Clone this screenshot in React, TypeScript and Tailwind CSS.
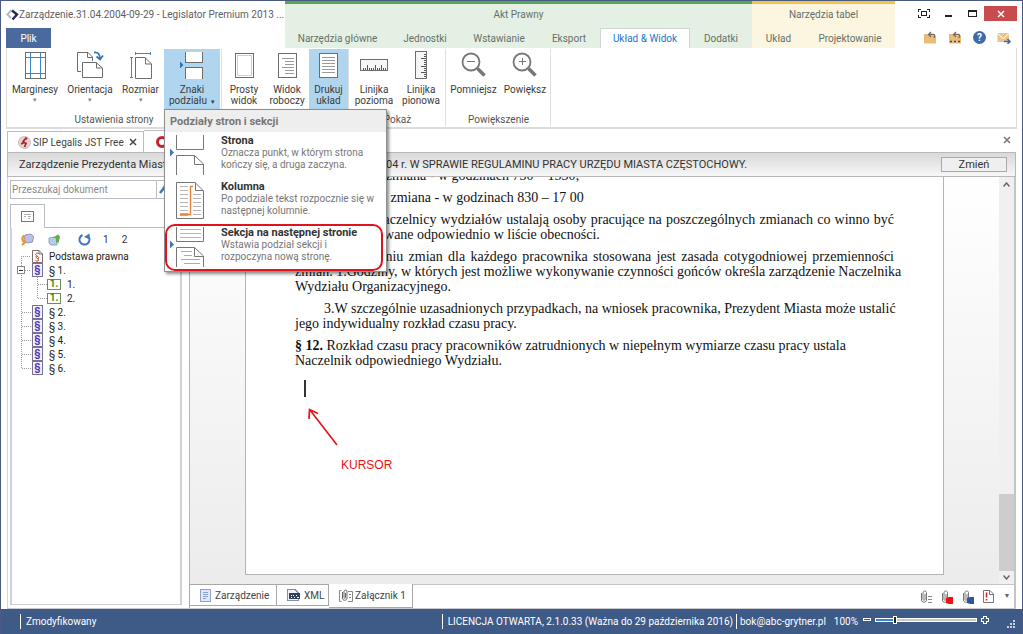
import React from "react";

interface BoxProps {
  className?: string;
  children?: React.ReactNode;
}

interface RibbonButtonProps {
  lines: string[];
  icon: React.ReactNode;
  className: string;
  arrow?: boolean;
  active?: boolean;
}

/* ---------- icons ---------- */

const Svg = ({
  w,
  h,
  crisp = true,
  children,
}: {
  w: number;
  h: number;
  crisp?: boolean;
  children: React.ReactNode;
}) => (
  <svg
    width={w}
    height={h}
    viewBox={`0 0 ${w} ${h}`}
    fill="none"
    className="shrink-0"
    shapeRendering={crisp ? "crispEdges" : "auto"}
    aria-hidden="true"
  >
    {children}
  </svg>
);

const MarginsIcon = () => (
  <Svg w={21} h={27}>
    <rect x="0.5" y="0.5" width="20" height="26" stroke="#6d6d6d" />
    <path d="M5.5 1v25M15.5 1v25M1 5.5h19M1 21.5h19" stroke="#3f87c4" />
  </Svg>
);

const OrientationIcon = () => (
  <Svg w={28} h={28} crisp={false}>
    <path d="M5 20.5H1.5V1.5H12L16.5 6V10" stroke="#6d6d6d" />
    <path d="M11.5 1.5V6.5H16.5" stroke="#6d6d6d" />
    <path d="M6.5 11.5H20L26.5 17V26.5H6.5Z" fill="#fff" stroke="#6d6d6d" />
    <path d="M20.5 11.5V17H26" stroke="#6d6d6d" />
    <path d="M18 1.5C22 1 24 3 24 8M20.5 5.5L24 8.5L27 4.5" stroke="#2f77b8" strokeWidth="1.8" />
  </Svg>
);

const SizeIcon = () => (
  <Svg w={22} h={27} crisp={false}>
    <path d="M5 1.5H21M5.5 0V3M20.5 0V3" stroke="#3f87c4" />
    <path d="M1.5 5V26M0 5.5H3M0 25.5H3" stroke="#3f87c4" />
    <path d="M5.5 5.5H15L21.5 12V26.5H5.5Z" fill="#fff" stroke="#6d6d6d" />
    <path d="M15.5 5.5V12H21" stroke="#6d6d6d" />
  </Svg>
);

const BreakIcon = () => (
  <Svg w={24} h={27}>
    <path d="M5 0H23V11H5Z" fill="#fff" />
    <path d="M5 15H23V27H5Z" fill="#fff" />
    <path d="M5.5 0V10.5H22.5V0M5.5 27V15.5H22.5V27" stroke="#6d6d6d" />
    <path d="M0 9.5L4 13L0 16.5Z" fill="#2f77b8" />
  </Svg>
);

const PageIcon = ({ kind }: { kind: "plain" | "work" | "print" }) => (
  <Svg w={19} h={25}>
    <rect x="0.5" y="0.5" width="18" height="24" fill="#fff" stroke="#6d6d6d" />
    {kind === "plain" && <rect x="2.5" y="2.5" width="14" height="20" stroke="#cfcfcf" />}
    {kind === "work" && (
      <path d="M4 5.5H16M7 8.5H16M7 11.5H16M4 14.5H16M7 17.5H16M7 20.5H16" stroke="#9a9a9a" />
    )}
    {kind === "print" && (
      <path d="M3 4.5H16M3 7.5H16M3 10.5H16M3 13.5H16M3 16.5H16M3 19.5H16" stroke="#9a9a9a" />
    )}
  </Svg>
);

const RulerIcon = () => (
  <Svg w={28} h={12}>
    <rect x="0.5" y="0.5" width="27" height="11" fill="#f6f6f6" stroke="#6d6d6d" />
    <path
      d="M3.5 9V11M5.5 9V11M7.5 6V11M9.5 9V11M11.5 9V11M13.5 9V11M15.5 6V11M17.5 9V11M19.5 9V11M21.5 6V11M23.5 9V11M25.5 9V11"
      stroke="#555"
    />
  </Svg>
);

const RulerVIcon = () => (
  <Svg w={12} h={28}>
    <rect x="0.5" y="0.5" width="11" height="27" fill="#f6f6f6" stroke="#6d6d6d" />
    <path
      d="M9 3.5H11M9 5.5H11M6 7.5H11M9 9.5H11M9 11.5H11M9 13.5H11M6 15.5H11M9 17.5H11M9 19.5H11M6 21.5H11M9 23.5H11M9 25.5H11"
      stroke="#555"
    />
  </Svg>
);

const ZoomIcon = ({ plus = false }: { plus?: boolean }) => (
  <Svg w={26} h={26} crisp={false}>
    <circle cx="10" cy="10" r="8.5" stroke="#777" strokeWidth="1.8" />
    <path d="M16.5 16.5L23.5 23.5" stroke="#777" strokeWidth="3.5" />
    <path d={plus ? "M7 9.5H14M10.5 6V13" : "M6 9.5H14"} stroke="#777" />
  </Svg>
);

const MenuPageIcon = ({ text = false }: { text?: boolean }) => (
  <Svg w={34} h={40} crisp={false}>
    <path d="M6.5 0V14.500H33.5V0" stroke="#777" />
    <path d="M6.5 40V20.5H24.5L33.5 29V40" stroke="#777" />
    <path d="M24.5 20.5V29.5H33.5" stroke="#777" />
    <path d="M0 13.5L4 17.5L0 21.5Z" fill="#3b78b4" />
    {text && (
      <>
        <path d="M10 2.5H31M10 6.5H31M10 10.5H31" stroke="#b5b5b5" />
        <path d="M11 24.5H22M14 28.5H22M11 32.5H30M14 36.5H30" stroke="#e8a04c" strokeWidth="1.2" />
      </>
    )}
  </Svg>
);

const MenuColumnIcon = () => (
  <Svg w={34} h={38} crisp={false}>
    <path d="M6.5 1.5H25L33.5 10V37.5H6.5Z" stroke="#777" />
    <path d="M25.5 1.5V9.5H33.5" stroke="#777" />
    <path
      d="M10 5.5H18M10 9.5H18M10 13.5H18M10 17.5H18M10 21.5H18M10 25.5H18M10 29.5H18M23 13.5H31M23 17.5H31M23 21.5H31M23 25.5H31M23 29.5H31M23 33.5H31"
      stroke="#b5b5b5"
    />
    <path d="M10 33.5H20.5V5.5H23" stroke="#e8833a" strokeWidth="1.4" />
    <path d="M10 33.5H18" stroke="#e8833a" strokeWidth="2.5" />
  </Svg>
);

const FolderIcon = ({ dots = false }: { dots?: boolean }) => (
  <Svg w={14} h={13} crisp={false}>
    <path d="M1 3H5L6 4.5H13V12.5H1Z" fill="#e9bd78" />
    <path d="M6 3.5H10.5C12 3.5 12 6.5 10.5 6.5M8 1L5.5 3.5L8 6" stroke="#7a6a62" strokeWidth="1.3" />
    {dots && <path d="M2 10.5H4M6 10.5H8M10 10.5H12" stroke="#35507f" strokeWidth="1.6" />}
  </Svg>
);

const MailIcon = () => (
  <Svg w={14} h={13} crisp={false}>
    <path d="M0.5 2H12V11H0.5Z" fill="#eac488" />
    <path d="M0.5 2.5L6.2 7.5L12 2.5" stroke="#fff" />
    <path d="M7 10.5H13M10.5 8L13 10.5L10.5 13" stroke="#3c68a6" strokeWidth="1.5" />
  </Svg>
);

const ClipIcon = ({ badge }: { badge?: "red" | "blue" }) => (
  <Svg w={13} h={14} crisp={false}>
    <path
      d="M1.5 3V10C1.5 13 6.5 13 6.5 10V2.5C6.5 0.5 3 0.5 3 2.5V9.5C3 10.5 5 10.5 5 9.5V4"
      stroke="#777"
    />
    {!badge && <path d="M8 6.5H12M8 9.5H12M8 12.5H12" stroke="#888" />}
    {badge === "red" && <path d="M5 8L8 7H12V14H8L5 13Z" fill="#ee1111" />}
    {badge === "blue" && <path d="M5 8L8 7H12V14H8L5 13Z" fill="#2d55a0" />}
  </Svg>
);

const WarnPageIcon = () => (
  <Svg w={11} h={13} crisp={false}>
    <path d="M0.5 0.5H7L10.5 4V12.5H0.5Z" stroke="#777" />
    <path d="M6.5 0.5V4.5H10.5" stroke="#777" />
    <path d="M3.5 2.5V7.5M3.5 9V10.5" stroke="#e02020" strokeWidth="1.5" />
  </Svg>
);

const CloseX = () => (
  <Svg w={8} h={8} crisp={false}>
    <path d="M1 1L7 7M7 1L1 7" stroke="currentColor" strokeWidth="1.5" />
  </Svg>
);

const SectionIcon = () => (
  <span className="flex h-[14px] w-[11px] shrink-0 items-center justify-center border border-[#77738f] bg-[#f4f1ff] text-[10px] font-bold leading-none text-[#5538b8]">
    §
  </span>
);

const NumberIcon = () => (
  <span className="flex h-[11px] w-[14px] shrink-0 items-center justify-center border border-[#6f8a60] bg-white text-[10px] font-bold leading-none text-[#3f8f1f]">
    1.
  </span>
);

const ProvisionIcon = () => (
  <Svg w={11} h={13} crisp={false}>
    <path d="M0.5 0.5H7L10.5 4V12.5H0.5Z" fill="#fff" stroke="#7b6d6d" />
    <path d="M7 0.5V4H10.5" stroke="#7b6d6d" />
    <path
      d="M6.5 3.5C4 2.5 2.5 4.5 5 6C7.5 7 7 9 5.5 8.5M4.5 6C2.5 8 7.5 9 6.5 10.5C5.5 11.5 4 11 3.5 10.5"
      stroke="#b03a2e"
    />
  </Svg>
);

/* ---------- header ---------- */

const HeaderTab: React.FC<BoxProps & { active?: boolean }> = ({ active, className = "", children }) => (
  <button
    className={`h-5 whitespace-nowrap text-center ${
      active ? "border-x border-t border-[#cfd8cf] bg-white text-[#1c74c8]" : "text-[#66706a]"
    } ${className}`}
  >
    {children}
  </button>
);

const Header = () => (
  <header className="flex text-[10px]">
    <div className="flex w-[284px] shrink-0 flex-col justify-between pl-[5px]">
      <div className="flex h-[26px] items-center text-[#606060]">
        <Svg w={13} h={13} crisp={false}>
          <path d="M5.5 2L1.5 6.5L5 10" stroke="#b9b6c8" strokeWidth="2" />
          <path d="M6 2.5L11 6.5L6.5 11.5" stroke="#24285c" strokeWidth="2.4" />
        </Svg>
        <h1 className="whitespace-nowrap">Zarządzenie.31.04.2004-09-29 - Legislator Premium 2013 ...</h1>
      </div>
      <button className="h-5 w-[45px] bg-[#4a6a9f] text-white">Plik</button>
    </div>
    <div className="shrink-0 border-t-[3px] border-[#57a557] bg-[#e4f0e4]">
      <div className="flex h-[24px] items-center justify-center pb-1 text-[#66706a]">Akt Prawny</div>
      <nav className="flex">
        <HeaderTab className="w-[105px]">Narzędzia główne</HeaderTab>
        <HeaderTab className="w-[70px]">Jednostki</HeaderTab>
        <HeaderTab className="w-[78px]">Wstawianie</HeaderTab>
        <HeaderTab className="w-[62px]">Eksport</HeaderTab>
        <HeaderTab active className="w-[90px]">
          Układ &amp; Widok
        </HeaderTab>
        <HeaderTab className="w-[62px]">Dodatki</HeaderTab>
      </nav>
    </div>
    <div className="shrink-0 border-t-[3px] border-[#f0c648] bg-[#fcf5df]">
      <div className="flex h-[24px] items-center justify-center pb-1 text-[#66706a]">Narzędzia tabel</div>
      <nav className="flex">
        <HeaderTab className="w-[53px]">Układ</HeaderTab>
        <HeaderTab className="w-[90px]">Projektowanie</HeaderTab>
      </nav>
    </div>
    <div className="flex flex-1 flex-col justify-between pt-[5px]">
      <div className="flex items-center justify-end pr-[5px]">
        <button className="flex w-6 justify-center" aria-label="Pełny ekran">
          <Svg w={12} h={9}>
            <path
              d="M0.5 3V0.5H3M9 0.5H11.5V3M11.5 6V8.5H9M3 8.5H0.5V6M3.5 2.5H8.5V6.5H3.5Z"
              stroke="#222"
            />
          </Svg>
        </button>
        <button className="flex w-6 justify-center" aria-label="Minimalizuj">
          <Svg w={7} h={7}>
            <path d="M0 5H7V7H0Z" fill="#222" />
          </Svg>
        </button>
        <button className="flex w-6 justify-center" aria-label="Maksymalizuj">
          <Svg w={9} h={7}>
            <path d="M0.5 1.5H8.5V6.5H0.5ZM0 0.5H9" stroke="#222" />
          </Svg>
        </button>
        <button className="flex h-[15px] w-[33px] items-center justify-center bg-[#c84c4e] text-white" aria-label="Zamknij">
          <CloseX />
        </button>
      </div>
      <div className="flex items-center justify-end gap-[11px] pb-1 pr-[11px]">
        <FolderIcon />
        <FolderIcon dots />
        <span className="flex h-[13px] w-[13px] items-center justify-center rounded-full bg-[#3f6aa8] text-[10px] font-bold leading-none text-white">
          ?
        </span>
        <MailIcon />
      </div>
    </div>
  </header>
);

/* ---------- ribbon ---------- */

const RibbonButton: React.FC<RibbonButtonProps> = ({ lines, icon, className, arrow, active }) => (
  <button
    className={`flex h-[60px] shrink-0 flex-col items-center whitespace-nowrap pt-[2px] leading-[11px] text-[#3c3c3c] ${
      active ? "bg-[#b0d5ef]" : ""
    } ${className}`}
  >
    <span className="mb-[5px] flex h-7 shrink-0 items-center">{icon}</span>
    {lines.map((line, index) => (
      <span key={line}>
        {line}
        {arrow && index === 1 && <span className="ml-1 text-[7px]">▾</span>}
      </span>
    ))}
    {arrow && lines.length === 1 && <span className="text-[7px] text-[#888]">▾</span>}
  </button>
);

const RibbonGroup: React.FC<BoxProps & { label?: string }> = ({ label, className = "", children }) => (
  <section className={`flex h-[77px] shrink-0 flex-col justify-between border-r border-[#e0e0e0] ${className}`}>
    <div className="flex">{children}</div>
    <div className="h-[13px] text-center leading-[13px] text-[#555]">{label}</div>
  </section>
);

const menuItems = [
  {
    title: "Strona",
    lines: ["Oznacza punkt, w którym strona", "kończy się, a druga zaczyna."],
    icon: <MenuPageIcon />,
  },
  {
    title: "Kolumna",
    lines: ["Po podziale tekst rozpocznie się w", "następnej kolumnie."],
    icon: <MenuColumnIcon />,
  },
  {
    title: "Sekcja na następnej stronie",
    lines: ["Wstawia podział sekcji i", "rozpoczyna nową stronę."],
    icon: <MenuPageIcon text />,
    marked: true,
  },
];

const BreaksMenu = () => (
  <div
    role="menu"
    className="absolute left-0 top-full z-20 w-[223px] border border-[#8f8f8f] bg-white pb-px shadow-[2px_2px_3px_rgba(0,0,0,0.45)]"
  >
    <div className="h-[22px] bg-[#eeeeee] pl-[5px] text-[11px] font-bold leading-[23px] text-[#777]">
      Podziały stron i sekcji
    </div>
    {menuItems.map((item) => (
      <button
        key={item.title}
        role="menuitem"
        className="relative flex h-[46px] w-full gap-[17px] whitespace-nowrap pl-[5px] pt-[3px] text-left"
      >
        {item.icon}
        <span className="flex flex-col leading-3 text-[#777]">
          <b className="text-[11px] text-[#333]">{item.title}</b>
          {item.lines.map((line) => (
            <span key={line}>{line}</span>
          ))}
        </span>
        {item.marked && (
          <span className="absolute inset-x-0 -bottom-px top-0 mr-[3px] rounded-[10px] border-2 border-[#e0121c]" />
        )}
      </button>
    ))}
  </div>
);

const Ribbon = () => (
  <div className="mx-[5px] flex h-[81px] border-b-2 border-l border-r border-[#dcdcdc] pt-px text-[10px]">
    <RibbonGroup label="Ustawienia strony" className="w-[215px]">
      <RibbonButton className="w-[56px]" lines={["Marginesy"]} icon={<MarginsIcon />} arrow />
      <RibbonButton className="w-[54px]" lines={["Orientacja"]} icon={<OrientationIcon />} arrow />
      <RibbonButton className="w-[47px]" lines={["Rozmiar"]} icon={<SizeIcon />} arrow />
      <div className="relative">
        <RibbonButton className="w-[56px]" lines={["Znaki", "podziału"]} icon={<BreakIcon />} arrow active />
        <BreaksMenu />
      </div>
    </RibbonGroup>
    <RibbonGroup className="w-[127px] pl-px">
      <RibbonButton className="w-[42px]" lines={["Prosty", "widok"]} icon={<PageIcon kind="plain" />} />
      <RibbonButton className="w-[44px]" lines={["Widok", "roboczy"]} icon={<PageIcon kind="work" />} />
      <RibbonButton className="w-[39px]" lines={["Drukuj", "układ"]} icon={<PageIcon kind="print" />} active />
    </RibbonGroup>
    <RibbonGroup label="Pokaż" className="w-[97px] pl-px">
      <RibbonButton className="w-[48px]" lines={["Linijka", "pozioma"]} icon={<RulerIcon />} />
      <RibbonButton className="w-[46px]" lines={["Linijka", "pionowa"]} icon={<RulerVIcon />} />
    </RibbonGroup>
    <RibbonGroup label="Powiększenie" className="w-[105px] pl-px">
      <RibbonButton className="w-[53px]" lines={["Pomniejsz"]} icon={<ZoomIcon />} />
      <RibbonButton className="w-[50px]" lines={["Powiększ"]} icon={<ZoomIcon plus />} />
    </RibbonGroup>
  </div>
);

/* ---------- left panel ---------- */

const Branch = ({ d }: { d: string }) => (
  <Svg w={15} h={14}>
    <path d={d} stroke="#999" strokeDasharray="1 1" />
  </Svg>
);

const TreeRow: React.FC<{ label: string; icon: React.ReactNode; children: React.ReactNode }> = ({
  label,
  icon,
  children,
}) => (
  <li className="flex h-[14px] items-center text-[#222]">
    {children}
    {icon}
    <span className="pl-[6px]">{label}</span>
  </li>
);

const LeftPanel = () => (
  <aside className="mb-[3px] ml-[2px] mr-[7px] flex w-[172px] shrink-0 flex-col pt-[3px] text-[10px]">
    <div className="flex h-[19px] items-center border border-[#b9bcc6]">
      <input
        aria-label="Przeszukaj dokument"
        placeholder="Przeszukaj dokument"
        className="h-full w-[146px] border-r border-[#b9bcc6] pl-px outline-none placeholder:text-[#8a8a8a]"
      />
      <Svg w={12} h={12} crisp={false}>
        <path d="M3 9L7 4" stroke="#3c78b4" strokeWidth="2.5" />
        <circle cx="8.5" cy="4" r="2.5" stroke="#3c78b4" />
      </Svg>
    </div>
    <div className="flex pt-[5px]">
      <button
        className="flex h-[24px] w-[35px] items-center justify-center border-l border-r border-t border-[#b9bcc6]"
        aria-label="Struktura"
      >
        <Svg w={13} h={11}>
          <rect x="0.5" y="0.5" width="12" height="10" stroke="#777" />
          <path d="M3 3.5H10M3 5.5H5M7 5.5H10M7 7.5H9" stroke="#aaa" />
        </Svg>
      </button>
      <div className="flex-1 border-b border-[#b9bcc6]" />
    </div>
    <div className="flex flex-1 flex-col border-x-2 border-b border-[#d0d0da] pl-[5px] pt-[3px]">
      <div className="flex h-4 items-center pl-1 text-[#333]">
        <button aria-label="Zwiń" className="mr-[14px]">
          <Svg w={13} h={13} crisp={false}>
            <path d="M4 2L10 1L12.5 3.5L11.5 9L6 10L3 7Z" fill="#b9c2e6" stroke="#8a97c6" />
            <path d="M3 2.5C0.5 5 1 8 4 9M1 12L5 8.5" stroke="#f0941e" strokeWidth="2.2" />
          </Svg>
        </button>
        <button aria-label="Rozwiń" className="mr-[17px]">
          <Svg w={13} h={13} crisp={false}>
            <path d="M1 5L6 4L9 6V12H3L1 10Z" fill="#b9c9ea" stroke="#8fa3cc" />
            <path d="M5 4.5L10 1.5L12 3.5L10.5 10L8 9V5Z" fill="#5fae48" />
          </Svg>
        </button>
        <button aria-label="Odśwież" className="mr-[12px]">
          <Svg w={13} h={13} crisp={false}>
            <path d="M4.5 2A5 5 0 1 0 11 4.5" stroke="#3f78bd" strokeWidth="2" />
            <path d="M6 4L11.5 0.5L12 6.5Z" fill="#3f78bd" />
          </Svg>
        </button>
        <button className="mr-[13px]">1</button>
        <button>2</button>
      </div>
      <ul className="pt-[2px]">
        <TreeRow label="Podstawa prawna" icon={<ProvisionIcon />}>
          <Branch d="M4.5 14V7.5M4 7.5H14" />
        </TreeRow>
        <TreeRow label="§ 1." icon={<SectionIcon />}>
          <Svg w={15} h={14}>
            <path d="M4.5 0V14M8 7.5H14" stroke="#999" strokeDasharray="1 1" />
            <rect x="0.5" y="3.5" width="7" height="7" fill="#fff" stroke="#888" />
            <path d="M2 7.5H6" stroke="#333" />
          </Svg>
        </TreeRow>
        <TreeRow label="1." icon={<NumberIcon />}>
          <Branch d="M4.5 0V14" />
          <Branch d="M5.5 0V14M6 7.5H15" />
        </TreeRow>
        <TreeRow label="2." icon={<NumberIcon />}>
          <Branch d="M4.5 0V14" />
          <Branch d="M5.5 0V8M6 7.5H15" />
        </TreeRow>
        {["§ 2.", "§ 3.", "§ 4.", "§ 5."].map((label) => (
          <TreeRow key={label} label={label} icon={<SectionIcon />}>
            <Branch d="M4.5 0V14M5 7.5H14" />
          </TreeRow>
        ))}
        <TreeRow label="§ 6." icon={<SectionIcon />}>
          <Branch d="M4.5 0V8M5 7.5H14" />
        </TreeRow>
      </ul>
    </div>
  </aside>
);

/* ---------- document ---------- */

const Justified: React.FC<BoxProps> = ({ className = "", children }) => (
  <span className={`block whitespace-nowrap text-justify [text-align-last:justify] ${className}`}>{children}</span>
);

const DocumentPage = () => (
  <article className="flex flex-1 flex-col overflow-hidden border-x border-b border-[#b4b4b4] bg-white px-[49px] font-['Liberation_Serif',serif] text-[14px] leading-[15px] text-[#111]">
    <div className="-mt-[9px] flex flex-col gap-[7px]">
      <p className="pl-[78px]">II zmiana - w godzinach 730 – 1530;</p>
      <p className="pl-[78px]">III zmiana - w godzinach 830 – 17 00</p>
      <p>
        <Justified className="pl-[68px]">
          1.Naczelnicy wydziałów ustalają osoby pracujące na poszczególnych zmianach co winno być
        </Justified>
        codziennie notowane odpowiednio w liście obecności.
      </p>
      <p>
        <Justified className="pl-[29px]">
          2.W ustaleniu zmian dla każdego pracownika stosowana jest zasada cotygodniowej przemienności
        </Justified>
        <Justified>
          zmian. 1.Godziny, w których jest możliwe wykonywanie czynności gońców określa zarządzenie Naczelnika
        </Justified>
        Wydziału Organizacyjnego.
      </p>
      <p>
        <Justified className="pl-[29px]">
          3.W szczególnie uzasadnionych przypadkach, na wniosek pracownika, Prezydent Miasta może ustalić
        </Justified>
        jego indywidualny rozkład czasu pracy.
      </p>
      <p>
        <b>§ 12.</b> Rozkład czasu pracy pracowników zatrudnionych w niepełnym wymiarze czasu pracy ustala
        <br />
        Naczelnik odpowiedniego Wydziału.
      </p>
    </div>
    <div className="ml-[9px] mt-3 h-[17px] w-[2px] bg-[#333]" />
    <div className="ml-[12px] mt-[11px]">
      <Svg w={32} h={38} crisp={false}>
        <path d="M30 37L3 2M2 11L2.5 1.5L11 5.5" stroke="#e8141c" strokeWidth="1.7" />
      </Svg>
    </div>
    <p className="ml-[46px] mt-3 font-['Liberation_Sans',sans-serif] text-[12px] text-[#f01010]">KURSOR</p>
  </article>
);

const SheetTab: React.FC<BoxProps & { active?: boolean }> = ({ active, className = "", children }) => (
  <button
    className={`flex items-center whitespace-nowrap border-b border-r border-[#a8a8a8] bg-white text-[#444] ${
      active ? "h-[24px] gap-[2px]" : "h-[22px] gap-1 border-t"
    } ${className}`}
  >
    {children}
  </button>
);

const DocumentArea = () => (
  <main className="flex min-w-0 flex-1 flex-col">
    <div className="flex min-h-0 flex-1 border-l border-[#b4b4b4] bg-gradient-to-b from-white to-[#ececec]">
      <div className="flex min-w-0 flex-1 px-[55px] pb-[9px]">
        <DocumentPage />
      </div>
      <div className="flex w-[17px] shrink-0 flex-col items-center border-r-2 border-[#c4c4c4] bg-[#f0f0f0] pb-1 pt-[5px] text-[#666]">
        <Svg w={7} h={5} crisp={false}>
          <path d="M0.5 4.5L3.5 1L6.5 4.5" stroke="currentColor" strokeWidth="1.5" />
        </Svg>
        <div className="flex-1" />
        <div className="mb-1 h-[77px] w-full bg-[#cdcdcd]" />
        <Svg w={7} h={5} crisp={false}>
          <path d="M0.5 0.5L3.5 4L6.5 0.5" stroke="currentColor" strokeWidth="1.5" />
        </Svg>
      </div>
    </div>
    <div className="flex h-[24px] shrink-0 border-l border-[#a8a8a8] text-[10px]">
      <SheetTab className="w-[87px] pl-[10px]">
        <Svg w={11} h={13}>
          <rect x="0.5" y="0.5" width="10" height="12" fill="#dfe8fa" stroke="#8da3d0" />
          <path d="M3 3.5H8M3 5.5H8M3 7.5H8M3 9.5H6" stroke="#8da3d0" />
        </Svg>
        Zarządzenie
      </SheetTab>
      <SheetTab className="w-[52px] pl-[10px]">
        <Svg w={13} h={12}>
          <path d="M0.5 0.5H8L11.5 4V11.5H0.5Z" fill="#eef2fa" stroke="#7d90b8" />
          <path d="M2 4H13V10H2Z" fill="#333f5a" />
          <path d="M4 6.5H5M6 6.5H7M9 6.5H10M4 8.5H5M7 8.5H8M10 8.5H12" stroke="#fff" />
        </Svg>
        XML
      </SheetTab>
      <SheetTab active className="w-[84px] pl-[10px]">
        <Svg w={14} h={13} crisp={false}>
          <path d="M2.5 1.5H0.5V12.5H2.5M9 2.5H13.5V12.5H9M10 5.5H12M10 8.5H12" stroke="#888" />
          <path
            d="M3.5 3V9C3.5 12 8 12 8 9V2.5C8 0.5 5 0.5 5 2.5V8.5C5 9.5 6.5 9.5 6.5 8.5V4"
            stroke="#666"
          />
        </Svg>
        Załącznik 1
      </SheetTab>
      <div className="flex flex-1 items-center justify-end gap-[8px] border-r-2 border-t border-[#c4c4c4] pr-[2px]">
        <ClipIcon />
        <ClipIcon badge="red" />
        <ClipIcon badge="blue" />
        <WarnPageIcon />
        <span className="w-[10px] text-center text-[7px] text-[#666]">▼</span>
      </div>
    </div>
  </main>
);

/* ---------- status bar ---------- */

const StatusBar = () => (
  <footer className="flex h-[25px] shrink-0 items-center whitespace-nowrap bg-[#3e5a86] text-[10px] text-white">
    <span className="ml-[19px] border-l border-white pl-[5px]">Zmodyfikowany</span>
    <span className="ml-auto border-l border-white pl-[5px] pr-[3px]">
      LICENCJA OTWARTA, 2.1.0.33 (Ważna do 29 października 2016)
    </span>
    <span className="border-l border-white pl-[3px] pr-[8px]">bok@abc-grytner.pl</span>
    <label htmlFor="zoom" className="pr-[5px]">
      100%
    </label>
    <span className="mb-1 h-[3px] w-2 border border-white" />
    <input
      id="zoom"
      type="range"
      min="0"
      max="100"
      defaultValue="18"
      className="mx-1 mb-1 h-2 w-[102px] appearance-none bg-transparent [&::-webkit-slider-runnable-track]:h-1 [&::-webkit-slider-runnable-track]:border [&::-webkit-slider-runnable-track]:border-white [&::-webkit-slider-runnable-track]:bg-[linear-gradient(to_right,#2f86d6_19%,#c9c9c9_19%)] [&::-webkit-slider-thumb]:-mt-[3px] [&::-webkit-slider-thumb]:h-2 [&::-webkit-slider-thumb]:w-1 [&::-webkit-slider-thumb]:appearance-none [&::-webkit-slider-thumb]:border [&::-webkit-slider-thumb]:border-white [&::-webkit-slider-thumb]:bg-[#222]"
    />
    <span className="mb-1">
      <Svg w={8} h={8}>
        <path d="M2.5 2.5V0.5H5.5V2.5H7.5V5.5H5.5V7.5H2.5V5.5H0.5V2.5Z" stroke="#fff" />
      </Svg>
    </span>
    <span className="ml-[18px] mr-[6px] mt-1">
      <Svg w={9} h={8}>
        <path d="M6 0H8V2H6ZM3 3H5V5H3ZM6 3H8V5H6ZM0 6H2V8H0ZM3 6H5V8H3ZM6 6H8V8H6Z" fill="#c5d0e2" />
      </Svg>
    </span>
  </footer>
);

export default function App() {
  return (
    <div className="flex h-screen flex-col overflow-hidden border-x border-t border-[#4a5a85] bg-white font-['Roboto',sans-serif] leading-[15px]">
      <Header />
      <Ribbon />
      <div className="mx-[6px] mt-px flex min-h-0 flex-1 flex-col border-b border-[#c9c9cf]">
        <div className="flex h-[22px] shrink-0 items-end text-[10px] text-[#444]">
          <div className="flex h-[21px] w-[137px] items-center border-l border-r border-t border-[#bdbdbd] pl-[10px]">
            <Svg w={13} h={13} crisp={false}>
              <circle cx="6.5" cy="6.5" r="6" fill="#e3d5d5" stroke="#cdb9b9" />
              <path d="M7 3L5 6L8 7.5L6.5 11M3 8L5.5 7" stroke="#b3202a" strokeWidth="1.8" />
              <circle cx="8" cy="2.5" r="1.3" fill="#b3202a" />
            </Svg>
            <span className="flex-1 whitespace-nowrap pl-[2px]">SIP Legalis JST Free</span>
            <button className="mr-[6px]" aria-label="Zamknij kartę">
              <CloseX />
            </button>
          </div>
          <div className="flex h-[22px] w-[150px] items-center border-r border-t border-[#bdbdbd] pl-[12px]">
            <span className="h-[12px] w-[12px] rounded-full border-[3px] border-[#c8202c]" />
          </div>
          <button className="mb-2 ml-auto mr-[5px] text-[#777]" aria-label="Zamknij dokument">
            <CloseX />
          </button>
        </div>
        <div className="flex h-[25px] shrink-0 items-center border border-[#b8b8b8] bg-gradient-to-b from-[#d9d9d9] to-[#f7f7f7] pl-[11px] pr-[8px] text-[11px] text-[#333]">
          <h2 className="flex flex-1 whitespace-nowrap">
            <span className="w-[367px] overflow-hidden">
              Zarządzenie Prezydenta Miasta Częstochowy z dnia 29 września 2004 r.
            </span>
            <span>04 r. W SPRAWIE REGULAMINU PRACY URZĘDU MIASTA CZĘSTOCHOWY.</span>
          </h2>
          <button className="h-[15px] w-[66px] border border-[#a9a9a9] bg-[#efefef] leading-[14px]">Zmień</button>
        </div>
        <div className="flex min-h-0 flex-1 border-l border-[#d8d4cf]">
          <LeftPanel />
          <DocumentArea />
        </div>
      </div>
      <StatusBar />
    </div>
  );
}
